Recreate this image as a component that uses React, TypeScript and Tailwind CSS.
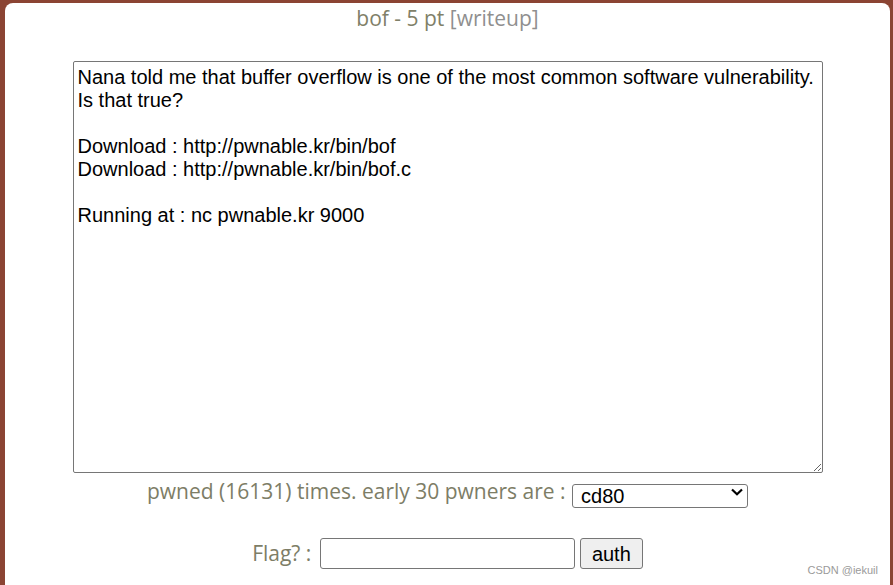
import React from "react";

const desc = `Nana told me that buffer overflow is one of the most common software vulnerability. 
Is that true?

Download : http://pwnable.kr/bin/bof
Download : http://pwnable.kr/bin/bof.c

Running at : nc pwnable.kr 9000`;

export default function App() {
  return (
    <div className="h-[585px] w-full overflow-hidden bg-[#8b4433] pt-[3px] pl-[5px] pr-[3px]">
      <div className="relative flex h-full flex-col items-center rounded-t-[8px] bg-white">
        <div className="h-[31px] font-['Open_Sans',sans-serif] text-[21px] leading-[31px] text-[#808068]">
          bof - 5 pt <span className="text-[#8f8f8f]">[writeup]</span>
        </div>
        <textarea
          readOnly
          defaultValue={desc}
          className="mt-[27px] h-[412px] w-[750px] rounded-[2px] border border-[#767676] px-[4px] pt-[4px] pb-[2px] font-['Liberation_Sans',Arial,sans-serif] text-[20px] leading-[23px] text-black outline-none"
        />
        <div className="mt-[4px] flex h-[30px] items-center font-['Open_Sans',sans-serif] text-[21px] text-[#7d7d66]">
          <span>pwned (16131) times. early 30 pwners are :&nbsp;</span>
          <div className="relative ml-[1px] h-[24px] w-[176px]">
            <select
              defaultValue="cd80"
              className="h-full w-full appearance-none rounded-[3px] border border-[#767676] bg-white py-0 pl-[8px] font-['Liberation_Sans',Arial,sans-serif] text-[20px] leading-[20px] text-black outline-none"
            >
              <option value="cd80">cd80</option>
            </select>
            <svg
              className="pointer-events-none absolute right-[5px] top-[8px]"
              width="12"
              height="8"
              viewBox="0 0 12 8"
            >
              <path d="M1 1.5 L6 6.3 L11 1.5" fill="none" stroke="#000" strokeWidth="2.2" />
            </svg>
          </div>
        </div>
        <div className="mt-[31px] flex h-[31px] items-center font-['Open_Sans',sans-serif] text-[21px] text-[#7d7d66]">
          <span>Flag? :&nbsp;</span>
          <input
            type="text"
            className="ml-[3px] h-[31px] w-[255px] rounded-[3px] border border-[#767676] bg-white outline-none"
          />
          <button className="ml-[5px] h-[31px] w-[63px] rounded-[3px] border border-[#767676] bg-[#efefef] font-['Liberation_Sans',Arial,sans-serif] text-[20px] text-black">
            auth
          </button>
        </div>
        <div className="absolute bottom-[9px] right-[12px] font-['Liberation_Sans',Arial,sans-serif] text-[11px] leading-[12px] text-[#9a9a9a]">
          CSDN @iekuil
        </div>
      </div>
    </div>
  );
}
